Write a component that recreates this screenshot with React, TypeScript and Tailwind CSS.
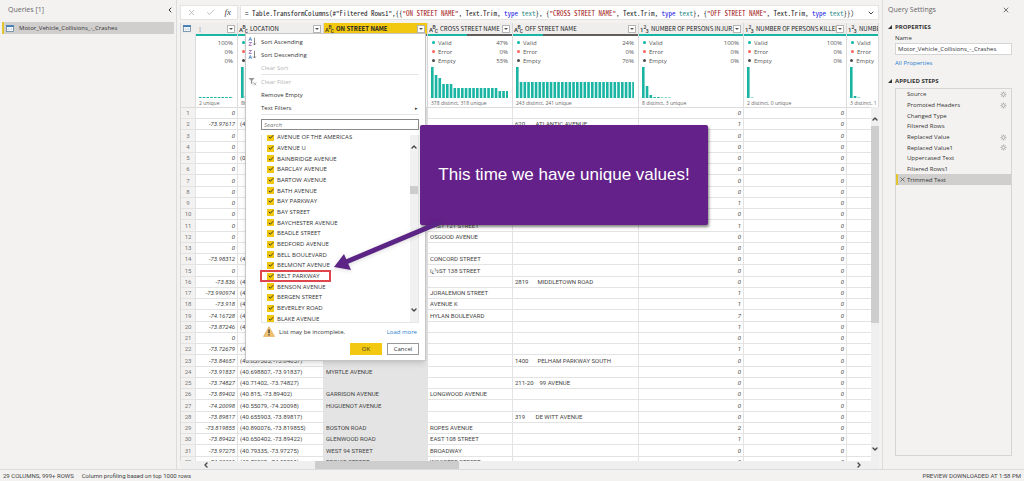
import { ReactNode } from 'react'
import { ChevronDown, ChevronLeft, ChevronRight, ChevronUp, X, Check } from 'lucide-react'

type ColumnKey = 'lat' | 'location' | 'onStreet' | 'crossStreet' | 'offStreet' | 'injured' | 'killed' | 'next'

interface Column {
  key: ColumnKey
  name: string
  kind: 'text' | 'number' | 'none'
  width: string
  valid: number
  summary: string
  bars: number[]
}

const COLUMNS: Column[] = [
  { key: 'lat', name: '', kind: 'none', width: 'w-[42px]', valid: 100, summary: '2 unique', bars: Array(10).fill(1) },
  { key: 'location', name: 'LOCATION', kind: 'text', width: 'w-[86px]', valid: 92, summary: '869 distinct, 810 unique', bars: [31, 2, 2, 2, 2] },
  { key: 'onStreet', name: 'ON STREET NAME', kind: 'text', width: 'w-[104px]', valid: 74, summary: '480 distinct, 352 unique', bars: [31, 12, 10] },
  {
    key: 'crossStreet',
    name: 'CROSS STREET NAME',
    kind: 'text',
    width: 'w-[85px]',
    valid: 47,
    summary: '378 distinct, 318 unique',
    bars: [31, 23, 20, 14, 14, 14, 10, 10, 10, 10, 10, 10, 10, 10, 10, 10, 10, 10, 7, 7, 7],
  },
  { key: 'offStreet', name: 'OFF STREET NAME', kind: 'text', width: 'w-[126px]', valid: 24, summary: '243 distinct, 241 unique', bars: [31, ...Array(31).fill(16)] },
  { key: 'injured', name: 'NUMBER OF PERSONS INJUR...', kind: 'number', width: 'w-[105px]', valid: 100, summary: '8 distinct, 3 unique', bars: [31, 12, 3, 1, 1, 0.5, 0.5, 0.5] },
  { key: 'killed', name: 'NUMBER OF PERSONS KILLED', kind: 'number', width: 'w-[103px]', valid: 100, summary: '2 distinct, 0 unique', bars: [31, 0.5] },
  { key: 'next', name: 'NUMBE', kind: 'number', width: '', valid: 100, summary: '3 distinct, 1', bars: [31, 2, 0.5] },
]

// [latitude, location, on street, cross street, off street, injured]
const ROWS: [string, string, string, string, string, number][] = [
  ['0', '', '', '', '', 0],
  ['-73.97617', '(40.68358, -73.97617)', '', '', '620       ATLANTIC AVENUE', 1],
  ['0', '', '', '', '', 0],
  ['0', '', '', '', '', 0],
  ['0', '(0, 0)', '', '', '', 0],
  ['0', '', '', '', '', 0],
  ['0', '', '', '', '', 0],
  ['0', '', '', '', '', 0],
  ['0', '', '', '', '', 1],
  ['0', '', '', '', '', 0],
  ['0', '', '', 'EAST 121 STREET', '', 1],
  ['0', '', '', 'OSGOOD AVENUE', '', 0],
  ['0', '', '', '', '', 0],
  ['-73.98312', '(40.69754, -73.98312)', '', 'CONCORD STREET', '', 0],
  ['0', '', '', 'ï¿½ST 138 STREET', '', 0],
  ['-73.836', '(40.84316, -73.836)', '', '', '2819      MIDDLETOWN ROAD', 0],
  ['-73.990974', '(40.69106, -73.990974)', '', 'JORALEMON STREET', '', 1],
  ['-73.918', '(40.62457, -73.918)', '', 'AVENUE K', '', 1],
  ['-74.16728', '(40.55578, -74.16728)', '', 'HYLAN BOULEVARD', '', 7],
  ['-73.87246', '(40.74746, -73.87246)', '', '', '', 1],
  ['0', '', '', '', '', 0],
  ['-73.72679', '(40.69416, -73.72679)', '', '', '', 1],
  ['-73.84657', '(40.857365, -73.84657)', '', '', '1400      PELHAM PARKWAY SOUTH', 0],
  ['-73.91837', '(40.698807, -73.91837)', 'MYRTLE AVENUE', '', '', 0],
  ['-73.74827', '(40.71402, -73.74827)', '', '', '211-20    99 AVENUE', 0],
  ['-73.89402', '(40.815, -73.89402)', 'GARRISON AVENUE', 'LONGWOOD AVENUE', '', 0],
  ['-74.20098', '(40.55079, -74.20098)', 'HUGUENOT AVENUE', '', '', 0],
  ['-73.89817', '(40.655903, -73.89817)', '', '', '319       DE WITT AVENUE', 0],
  ['-73.819855', '(40.890076, -73.819855)', 'BOSTON ROAD', 'ROPES AVENUE', '', 2],
  ['-73.89422', '(40.650402, -73.89422)', 'GLENWOOD ROAD', 'EAST 108 STREET', '', 1],
  ['-73.97275', '(40.79335, -73.97275)', 'WEST 94 STREET', 'BROADWAY', '', 0],
  ['-74.00011', '(40.72528, -74.00011)', 'PRINCE STREET', 'WOOSTER STREET', '', 0],
]

const FILTER_VALUES = [
  'AVENUE OF THE AMERICAS',
  'AVENUE U',
  'BAINBRIDGE AVENUE',
  'BARCLAY AVENUE',
  'BARTOW AVENUE',
  'BATH AVENUE',
  'BAY PARKWAY',
  'BAY STREET',
  'BAYCHESTER AVENUE',
  'BEADLE STREET',
  'BEDFORD AVENUE',
  'BELL BOULEVARD',
  'BELMONT AVENUE',
  'BELT PARKWAY',
  'BENSON AVENUE',
  'BERGEN STREET',
  'BEVERLEY ROAD',
  'BLAKE AVENUE',
]

const STEPS = [
  { name: 'Source', gear: true },
  { name: 'Promoted Headers', gear: true },
  { name: 'Changed Type', gear: false },
  { name: 'Filtered Rows', gear: false },
  { name: 'Replaced Value', gear: true },
  { name: 'Replaced Value1', gear: true },
  { name: 'Uppercased Text', gear: false },
  { name: 'Filtered Rows1', gear: false },
  { name: 'Trimmed Text', gear: false },
]

function TableIcon() {
  return (
    <svg viewBox="0 0 8 7" className="h-[7px] w-2 shrink-0" aria-hidden="true">
      <rect x="0.4" y="0.4" width="7.2" height="6.2" fill="#fff" stroke="#4a6f8f" strokeWidth="0.7" />
      <rect x="0.4" y="0.4" width="7.2" height="1.6" fill="#3b7dbb" />
      <path d="M0.4 4.2H7.6M2.8 2V6.6M5.2 2V6.6" stroke="#a9bccb" strokeWidth="0.4" />
    </svg>
  )
}

function TypeIcon({ kind }: { kind: 'text' | 'number' }) {
  const [a, b, c] = kind === 'text' ? ['A', 'B', 'C'] : ['1', '2', '3']
  return (
    <svg viewBox="0 0 9 10" className="h-[10px] w-[9px] shrink-0" fill="#333" fontFamily="Roboto" fontWeight="500" aria-hidden="true">
      <text x="0" y="7.5" fontSize="6">{a}</text>
      <text x="3.4" y="5" fontSize="5">{b}</text>
      <text x="5.8" y="9" fontSize="5">{c}</text>
    </svg>
  )
}

function SortIcon({ descending = false }: { descending?: boolean }) {
  return (
    <svg viewBox="0 0 9 9" className="h-[9px] w-[9px]" fill="none" strokeWidth="0.7" aria-hidden="true">
      <g transform={descending ? 'translate(0 5)' : undefined} stroke="#2f6fb0">
        <path d="M0.8 3.8L2.3 0.4L3.8 3.8M1.3 2.7H3.3" />
      </g>
      <g transform={descending ? undefined : 'translate(0 5)'} stroke="#8d4a9e">
        <path d="M0.9 0.5H3.6L0.9 3.5H3.7" />
      </g>
      <path d="M6.5 0.8V7.8M5.2 6.5L6.5 8L7.8 6.5" stroke="#555" />
    </svg>
  )
}

function ClearFilterIcon() {
  return (
    <svg viewBox="0 0 9 9" className="h-[9px] w-[9px]" fill="none" aria-hidden="true">
      <path d="M0.5 1H6.5L4.3 3.8V7.5L2.9 6.5V3.8Z" fill="#999" />
      <path d="M5.3 5.3L8.3 8.3M8.3 5.3L5.3 8.3" stroke="#999" strokeWidth="0.8" />
    </svg>
  )
}

function GearIcon() {
  return (
    <svg viewBox="0 0 8 8" className="h-[7px] w-[7px]" fill="none" stroke="#9b9b9b" aria-hidden="true">
      <circle cx="4" cy="4" r="1.9" strokeWidth="0.9" />
      <path d="M4 0.5V2M4 6V7.5M0.5 4H2M6 4H7.5M1.5 1.5L2.6 2.6M5.4 5.4L6.5 6.5M1.5 6.5L2.6 5.4M5.4 2.6L6.5 1.5" strokeWidth="0.7" />
    </svg>
  )
}

function WarningIcon() {
  return (
    <svg viewBox="0 0 12 11" className="h-[11px] w-3" aria-hidden="true">
      <path d="M6 0.7L11.5 10.4H0.5Z" fill="#f0c270" stroke="#dba24a" strokeWidth="0.6" strokeLinejoin="round" />
      <path d="M6 3.4V7.2M6 8.2V9.4" stroke="#333" strokeWidth="1.3" />
    </svg>
  )
}

function FilterButton({ label }: { label: string }) {
  return (
    <button aria-label={label} className="flex h-2 w-2 shrink-0 items-center justify-center border border-[#b5b5b5] bg-white">
      <svg viewBox="0 0 4 2" className="h-[2px] w-1" aria-hidden="true">
        <path d="M0 0H4L2 2Z" fill="#555" />
      </svg>
    </button>
  )
}

function ColumnHeader({ column }: { column: Column }) {
  const selected = column.key === 'onStreet'
  return (
    <th className={`border-r border-[#d8d8d8] p-0 ${selected ? 'bg-[#f2c811]' : 'bg-[#efeeed]'}`}>
      <div className="flex h-[11px] items-center gap-[2px] overflow-hidden pr-[2px] pl-[1px] font-['Liberation_Sans_Narrow','Noto_Sans_CJK_SC',sans-serif]">
        {column.kind === 'none' ? <span className="text-[#999]">⋮</span> : <TypeIcon kind={column.kind} />}
        <span className={`min-w-0 flex-1 text-left whitespace-nowrap ${selected ? 'font-bold' : 'font-normal'} text-[#222]`}>{column.name}</span>
        {column.key !== 'next' && <FilterButton label={`Filter ${column.name}`} />}
      </div>
    </th>
  )
}

function ColumnProfile({ column }: { column: Column }) {
  const stats = [
    { name: 'Valid', value: column.valid, dot: 'bg-[#01b8aa]' },
    { name: 'Error', value: 0, dot: 'bg-[#fd625e]' },
    { name: 'Empty', value: 100 - column.valid, dot: 'bg-[#4a4a4a]' },
  ]
  return (
    <td className="border-r border-b border-[#dcdcdc] p-0 align-top">
      <div className="h-[2px] bg-[#605e5c]">
        <div className="h-full bg-[#1ab5a3]" style={{ width: `${column.valid}%` }} />
      </div>
      <div className="flex h-[71px] flex-col overflow-hidden pt-[2px] pr-1 pl-[3px] font-['Open_Sans','Noto_Sans',sans-serif]">
        {stats.map(stat => (
          <div key={stat.name} className="flex h-[9px] items-center gap-[3px] text-[#555]">
            {column.kind !== 'none' && <span className="flex w-1 justify-end"><span className={`h-[3px] w-[3px] rounded-full ${stat.dot}`} /></span>}
            {column.kind !== 'none' && <span>{stat.name}</span>}
            {column.key !== 'next' && <span className="ml-auto">{stat.value}%</span>}
          </div>
        ))}
        <svg className="mt-[2px] h-[31px] w-full shrink-0" aria-hidden="true">
          {column.bars.map((height, i) => (
            <rect key={i} x={i * 3.75} y={31 - height} width="2.6" height={height} fill="#1ab5a3" />
          ))}
        </svg>
        <div className="h-[9px] text-[5px] leading-[10px] whitespace-nowrap text-[#666]">{column.summary}</div>
      </div>
    </td>
  )
}

function Cell({ children, className = '' }: { children?: ReactNode; className?: string }) {
  return <td className={`overflow-hidden border-r border-b border-[#e3e3e3] py-0 pr-[2px] pl-[2px] whitespace-pre ${className}`}>{children}</td>
}

function DataGrid() {
  return (
    <div className="relative mx-[3px] min-h-0 flex-1 overflow-hidden bg-white">
      <table className="w-full table-fixed border-separate border-spacing-0 border-l border-[#d8d8d8] font-['Roboto',sans-serif] text-[6px] leading-[10px] text-[#444]">
        <colgroup>
          <col className="w-[15px]" />
          {COLUMNS.map(column => (
            <col key={column.key} className={column.width} />
          ))}
        </colgroup>
        <thead>
          <tr>
            <th className="bg-[#efeeed] p-0">
              <div className="flex items-center pl-[2px]">
                <TableIcon />
              </div>
            </th>
            {COLUMNS.map(column => (
              <ColumnHeader key={column.key} column={column} />
            ))}
          </tr>
        </thead>
        <tbody>
          <tr>
            <td className="border-r border-b border-[#dcdcdc] bg-[#f3f2f1] p-0" />
            {COLUMNS.map(column => (
              <ColumnProfile key={column.key} column={column} />
            ))}
          </tr>
          {ROWS.map(([lat, location, onStreet, crossStreet, offStreet, injured], i) => (
            <tr key={i} className="h-[11px] nth-[4n]:h-3">
              <Cell className="bg-[#f3f2f1] text-center text-[#777]">{i + 1}</Cell>
              <Cell className="text-right italic">{lat}</Cell>
              <Cell>{location}</Cell>
              <Cell className="bg-[#e4e4e4]">{onStreet}</Cell>
              <Cell>{crossStreet}</Cell>
              <Cell>{offStreet}</Cell>
              <Cell className="text-right italic">{injured}</Cell>
              <Cell className="text-right italic">0</Cell>
              <Cell />
            </tr>
          ))}
        </tbody>
      </table>

      {/* Scrollbars float over the grid */}
      <div className="absolute top-[84px] right-0 bottom-2 flex w-2 flex-col items-center bg-[#efefef]">
        <ChevronUp size={8} strokeWidth={4} className="mt-2 text-[#444]" />
        <div className="mt-[3px] h-[197px] w-full bg-[#cdcdcd]" />
        <ChevronDown size={8} strokeWidth={4} className="mt-auto mb-2 text-[#444]" />
      </div>
      <div className="absolute inset-x-0 bottom-0 flex h-2 items-center bg-[#efefef] pr-4 pl-[22px]">
        <ChevronLeft size={8} strokeWidth={4} className="text-[#444]" />
        <div className="ml-[105px] h-full w-36 bg-[#cdcdcd]" />
        <ChevronRight size={8} strokeWidth={4} className="ml-auto text-[#444]" />
      </div>
    </div>
  )
}

function MenuItem({ icon, label, disabled, arrow }: { icon?: ReactNode; label: string; disabled?: boolean; arrow?: boolean }) {
  return (
    <button disabled={disabled} className="flex h-[13px] w-full items-center text-left text-[#333] disabled:text-[#b5b5b5]">
      <span className="w-[13px]">{icon}</span>
      <span className="flex-1">{label}</span>
      {arrow && <span className="pr-[1px] text-[5px]">▸</span>}
    </button>
  )
}

function FilterMenu() {
  return (
    <div className="absolute top-[33px] left-[245px] w-[181px] border border-[#c6c6c6] bg-white pt-[1px] pr-[6px] pb-[5px] pl-[2px] text-[6px] leading-[10px] text-[#333] shadow-md">
      <MenuItem icon={<SortIcon />} label="Sort Ascending" />
      <MenuItem icon={<SortIcon descending />} label="Sort Descending" />
      <MenuItem label="Clear Sort" disabled />
      <hr className="ml-[13px] border-[#e6e6e6]" />
      <MenuItem icon={<ClearFilterIcon />} label="Clear Filter" disabled />
      <MenuItem label="Remove Empty" />
      <MenuItem label="Text Filters" arrow />
      <hr className="ml-[13px] border-[#e6e6e6]" />
      <div className="ml-[13px]">
        <input
          aria-label="Search"
          placeholder="Search"
          className="mt-1 block h-[11px] w-full border border-[#8a8a8a] px-[2px] placeholder:text-[#777] placeholder:italic"
        />
        <div className="mt-[5px] flex h-[188px] border border-t-0 border-[#e6e6e6]">
          <div className="flex h-full flex-1 flex-col overflow-y-clip">
            {/* the list is scrolled, so its last row is cut off */}
            <div className="-mt-[3px] flex h-48 shrink-0 flex-col">
              {FILTER_VALUES.map(value => (
                <label key={value} className="relative flex flex-1 items-center gap-[3px] pl-[5px]">
                  <span className="grid h-[7px] w-[7px] place-items-center bg-[#f2c811]">
                    <input type="checkbox" defaultChecked className="col-start-1 row-start-1 h-[7px] w-[7px] appearance-none" />
                    <Check size={6} strokeWidth={4} className="pointer-events-none col-start-1 row-start-1 text-[#333]" />
                  </span>
                  {value}
                  {value === 'BELT PARKWAY' && <span className="absolute -inset-y-px -left-[2px] w-[71px] border-2 border-[#e0474c]" />}
                </label>
              ))}
            </div>
          </div>
          <div className="flex w-2 flex-col items-center bg-[#f1f1f1] py-2">
            <ChevronUp size={8} strokeWidth={4} className="text-[#444]" />
            <div className="mt-[35px] h-2 w-full bg-[#cdcdcd]" />
            <ChevronDown size={8} strokeWidth={4} className="mt-auto text-[#444]" />
          </div>
        </div>
        <div className="flex h-[17px] items-center gap-1 pl-[2px]">
          <WarningIcon />
          <span>List may be incomplete.</span>
          <a href="#more" className="ml-auto pr-[2px] text-[#2a7fd0]">Load more</a>
        </div>
        <div className="mt-[3px] flex justify-end gap-[5px]">
          <button className="h-3 w-8 bg-[#f2c811]">OK</button>
          <button className="h-3 w-8 border border-[#999] bg-white">Cancel</button>
        </div>
      </div>
    </div>
  )
}

function Callout() {
  return (
    <>
      <div className="absolute top-[125px] left-[420px] flex h-[100px] w-[288px] items-center justify-center rounded-[2px] bg-[#642189] font-['Liberation_Sans',Arial,sans-serif] text-[17px] text-white shadow-[1px_2px_3px_rgba(0,0,0,0.5)]">
        This time we have unique values!
      </div>
      <svg viewBox="0 0 110 50" className="absolute top-[221px] left-[333px] h-[50px] w-[110px] drop-shadow-sm" aria-hidden="true">
        <path d="M108 1L13 41" stroke="#5c2585" strokeWidth="5" />
        <path d="M1 46L11 33L18 49Z" fill="#5c2585" />
      </svg>
    </>
  )
}

function FormulaBar() {
  return (
    <div className="mx-[3px] mt-[5px] flex h-[15px] shrink-0 gap-[2px] text-[#444]">
      <div className="flex w-[58px] items-center justify-between border border-[#e3e3e3] bg-white px-[6px]">
        <button aria-label="Cancel edit"><X size={9} className="text-[#aaa]" /></button>
        <button aria-label="Commit edit"><Check size={9} className="text-[#aaa]" /></button>
        <button aria-label="Insert step" className="font-['Liberation_Serif',serif] text-[9px] leading-none italic">fx</button>
      </div>
      <div className="flex flex-1 items-center border border-[#e3e3e3] bg-white pr-[3px] pl-1">
        <code className="flex-1 overflow-hidden font-['Noto_Sans_Mono_CJK_SC','Liberation_Mono',monospace] text-[7px] leading-[10px] whitespace-pre text-[#222]">
          = Table.TransformColumns(#"Filtered Rows1",{'{{'}
          <Str>"ON STREET NAME"</Str>, Text.Trim, <TypeText />{'}, {'}
          <Str>"CROSS STREET NAME"</Str>, Text.Trim, <TypeText />{'}, {'}
          <Str>"OFF STREET NAME"</Str>, Text.Trim, <TypeText />{'}})'}
        </code>
        <ChevronDown size={8} strokeWidth={3} />
      </div>
    </div>
  )
}

function Str({ children }: { children: ReactNode }) {
  return <span className="text-[#a31515]">{children}</span>
}

function TypeText() {
  return (
    <>
      <span className="text-[#2020e0]">type</span> <span className="text-[#2b8a8a]">text</span>
    </>
  )
}

function QueriesPane() {
  return (
    <aside className="w-[177px] shrink-0 border-r border-[#dcdcdc]">
      <div className="flex h-5 items-center justify-between pr-[2px] pl-2">
        <h2 className="text-[7px] text-[#666]">Queries [1]</h2>
        <button aria-label="Collapse queries"><ChevronLeft size={8} strokeWidth={3} /></button>
      </div>
      <div className="mt-[2px] mr-[2px] ml-[2px] flex h-3 items-center gap-[5px] border-l-2 border-[#e3c52f] bg-[#d0cfce] pl-[2px]">
        <TableIcon />
        <span>Motor_Vehicle_Collisions_-_Crashes</span>
      </div>
    </aside>
  )
}

function QuerySettings() {
  return (
    <aside className="flex w-[142px] shrink-0 flex-col border-l border-[#dcdcdc] pr-3 pl-[5px]">
      <div className="flex h-5 items-center justify-between pr-[2px]">
        <h2 className="text-[7px] text-[#666]">Query Settings</h2>
        <button aria-label="Close settings"><X size={8} /></button>
      </div>
      <h3 className="mt-[1px] flex h-3 items-center gap-[3px] font-bold"><Triangle />PROPERTIES</h3>
      <div className="pl-[7px]">
        <label htmlFor="query-name" className="block h-[10px]">Name</label>
        <input id="query-name" defaultValue="Motor_Vehicle_Collisions_-_Crashes" className="block h-3 w-full border border-[#d5d5d5] bg-white px-[2px]" />
        <a href="#properties" className="mt-[3px] block text-[#2a7fd0]">All Properties</a>
      </div>
      <h3 className="mt-[7px] flex h-3 items-center gap-[3px] font-bold"><Triangle />APPLIED STEPS</h3>
      <div className="mt-[1px] mb-[13px] ml-[7px] flex-1 border border-[#d5d5d5]">
        <ol className="flex h-24 flex-col">
          {STEPS.map(step => {
            const active = step.name === 'Trimmed Text'
            return (
              <li key={step.name} className={`flex flex-1 items-center pr-1 ${active ? 'border-l-2 border-[#e3c52f] bg-[#d0cfce] pl-[1px]' : 'pl-[3px]'}`}>
                <span className="w-2">{active && <X size={7} />}</span>
                <span className="flex-1">{step.name}</span>
                {step.gear && <button aria-label={`Edit ${step.name}`}><GearIcon /></button>}
              </li>
            )
          })}
        </ol>
      </div>
    </aside>
  )
}

function Triangle() {
  return (
    <svg viewBox="0 0 4 4" className="h-1 w-1" aria-hidden="true">
      <path d="M4 0V4H0Z" fill="#333" />
    </svg>
  )
}

export default function App() {
  return (
    <div className="relative flex h-screen flex-col overflow-hidden bg-[#f3f2f1] font-['Open_Sans','Noto_Sans',sans-serif] text-[6px] leading-[10px] text-[#333]">
      <div className="flex min-h-0 flex-1">
        <QueriesPane />
        <main className="flex min-w-0 flex-1 flex-col">
          <FormulaBar />
          <div className="h-[3px] shrink-0" />
          <DataGrid />
        </main>
        <QuerySettings />
      </div>
      <footer className="flex h-3 shrink-0 items-center gap-2 border-t border-[#dcdcdc] px-[3px] font-['Roboto',sans-serif] text-[#444]">
        <span>29 COLUMNS, 999+ ROWS</span>
        <span>Column profiling based on top 1000 rows</span>
        <span className="ml-auto">PREVIEW DOWNLOADED AT 1:58 PM</span>
      </footer>
      <FilterMenu />
      <Callout />
    </div>
  )
}
